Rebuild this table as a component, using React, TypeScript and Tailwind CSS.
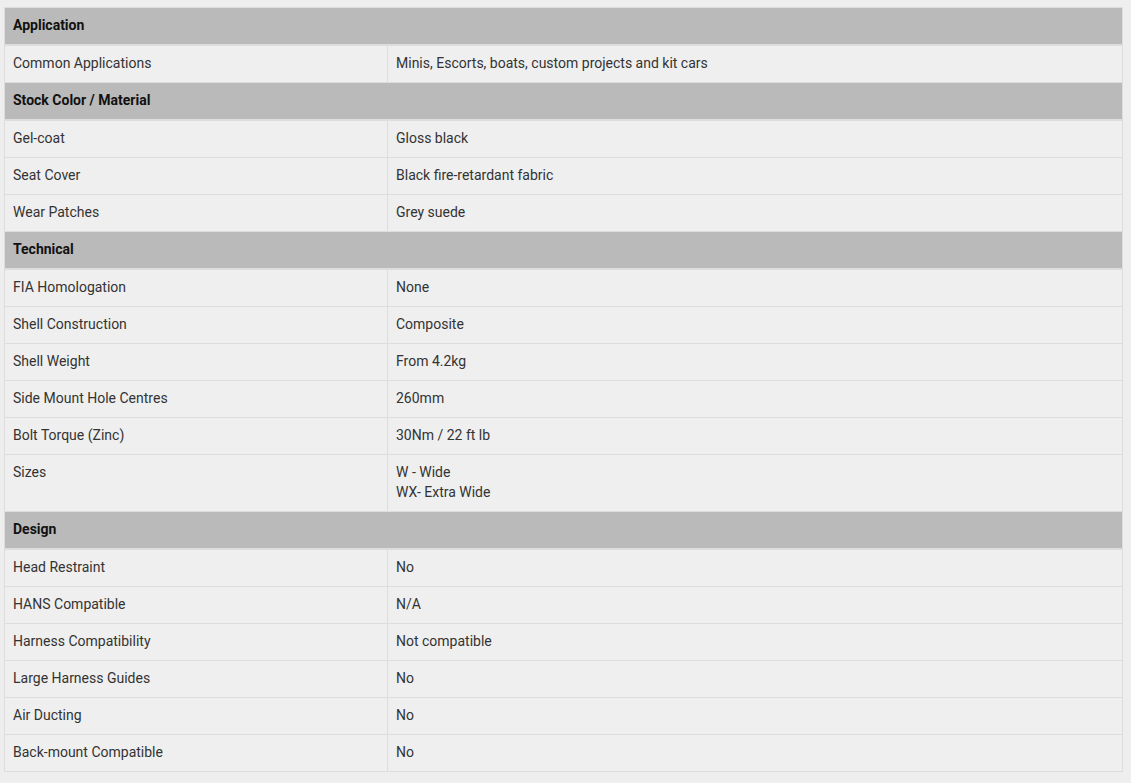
const sections: { title: string; rows: [string, string[]][] }[] = [
  {
    title: "Application",
    rows: [["Common Applications", ["Minis, Escorts, boats, custom projects and kit cars"]]],
  },
  {
    title: "Stock Color / Material",
    rows: [
      ["Gel-coat", ["Gloss black"]],
      ["Seat Cover", ["Black fire-retardant fabric"]],
      ["Wear Patches", ["Grey suede"]],
    ],
  },
  {
    title: "Technical",
    rows: [
      ["FIA Homologation", ["None"]],
      ["Shell Construction", ["Composite"]],
      ["Shell Weight", ["From 4.2kg"]],
      ["Side Mount Hole Centres", ["260mm"]],
      ["Bolt Torque (Zinc)", ["30Nm / 22 ft lb"]],
      ["Sizes", ["W - Wide", "WX- Extra Wide"]],
    ],
  },
  {
    title: "Design",
    rows: [
      ["Head Restraint", ["No"]],
      ["HANS Compatible", ["N/A"]],
      ["Harness Compatibility", ["Not compatible"]],
      ["Large Harness Guides", ["No"]],
      ["Air Ducting", ["No"]],
      ["Back-mount Compatible", ["No"]],
    ],
  },
];

export default function App() {
  return (
    <div
      className="min-h-screen bg-[#eeeeee] pl-1 pr-2 pt-[7px] text-[14px] leading-5"
      style={{ fontFamily: "Roboto, 'Liberation Sans', sans-serif" }}
    >
      <table className="w-full border-collapse border border-[#dddddd]">
        <tbody>
          {sections.map((section) => (
            <>
              <tr key={section.title} className="bg-[#bababa]">
                <th
                  colSpan={2}
                  className="border border-b-2 border-[#dddddd] px-2 pt-[7px] pb-[9px] text-left font-bold text-[#111111]"
                >
                  {section.title}
                </th>
              </tr>
              {section.rows.map(([label, values]) => (
                <tr key={label} className="bg-[#efefef]">
                  <td className="w-[383px] border border-[#dddddd] px-2 pt-[7px] pb-[9px] align-top text-[#333333]">
                    {label}
                  </td>
                  <td className="border border-[#dddddd] px-2 pt-[7px] pb-[9px] align-top text-[#333333]">
                    {values.map((v) => (
                      <div key={v}>{v}</div>
                    ))}
                  </td>
                </tr>
              ))}
            </>
          ))}
        </tbody>
      </table>
    </div>
  );
}
